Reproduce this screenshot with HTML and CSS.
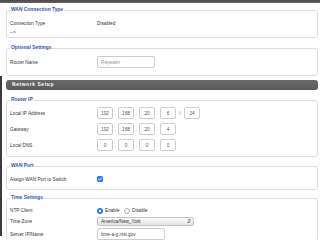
FILE: index.html
```html
<!DOCTYPE html>
<html>
<head>
<meta charset="utf-8">
<link rel="stylesheet" href="styles.css">
</head>
<body>
<div class="topbar"></div>
<div class="page">
  <fieldset class="fs fs-wan">
    <legend>WAN Connection Type</legend>
    <div class="row row-first"><span class="label">Connection Type</span><span class="value">Disabled</span></div>
    <div class="row row-arrow"><span class="label">--&gt;</span></div>
  </fieldset>

  <fieldset class="fs fs-opt">
    <legend>Optional Settings</legend>
    <div class="row"><span class="label">Router Name</span><input class="text text-name" type="text" placeholder="Repeater"></div>
  </fieldset>
</div>

<div class="page page-net">
  <div class="section">Network Setup</div>

  <fieldset class="fs fs-ip">
    <legend>Router IP</legend>
    <div class="row"><span class="label">Local IP Address</span>
      <span class="oct">192</span><span class="sep">.</span><span class="oct">168</span><span class="sep">.</span><span class="oct">20</span><span class="sep">.</span><span class="oct">6</span><span class="sep sep-slash">/</span><span class="oct">24</span>
    </div>
    <div class="row"><span class="label">Gateway</span>
      <span class="oct">192</span><span class="sep">.</span><span class="oct">168</span><span class="sep">.</span><span class="oct">20</span><span class="sep">.</span><span class="oct">4</span>
    </div>
    <div class="row"><span class="label">Local DNS</span>
      <span class="oct">0</span><span class="sep">.</span><span class="oct">0</span><span class="sep">.</span><span class="oct">0</span><span class="sep">.</span><span class="oct">0</span>
    </div>
  </fieldset>

  <fieldset class="fs fs-port">
    <legend>WAN Port</legend>
    <div class="row"><span class="label">Assign WAN Port to Switch</span>
      <span class="check"><svg viewBox="0 0 6 6" width="6" height="6"><path d="M1.4 3.1 L2.5 4.2 L4.6 1.8" fill="none" stroke="#fff" stroke-width="0.9" stroke-linecap="round" stroke-linejoin="round"/></svg></span>
    </div>
  </fieldset>

  <fieldset class="fs fs-time">
    <legend>Time Settings</legend>
    <div class="row row-ntp"><span class="label">NTP Client</span>
      <span class="radio radio-on"></span><span class="opt">Enable</span>
      <span class="radio"></span><span class="opt">Disable</span>
    </div>
    <div class="row row-tz"><span class="label">Time Zone</span>
      <span class="select">America/New_York<span class="arrows">&#8693;</span></span>
    </div>
    <div class="row"><span class="label">Server IP/Name</span>
      <span class="text text-server">time-a-g.nist.gov</span>
    </div>
  </fieldset>
</div>
</body>
</html>
```

FILE: styles.css
```css
* { box-sizing: border-box; }
html, body { margin: 0; padding: 0; background: #fff; }
body {
  font-family: "Liberation Sans", Arial, sans-serif;
  font-size: 4.7px;
  color: #333;
  width: 320px;
  height: 240px;
  overflow: hidden;
}
.topbar { height: 3px; background: linear-gradient(#4a4a4a, #666); }
.page { padding: 0 2px 0 6px; }
.page-net {
  border-left: 2px solid #3c3c3c;
  padding-left: 4px;
  padding-top: 4px;
  height: 160px;
}

.fs {
  border: 1px solid #ddd;
  border-radius: 3px;
  margin: 0;
  padding: 0 3px;
  min-width: 0;
}
.fs legend {
  font-size: 4.9px;
  line-height: 6px;
  font-weight: bold;
  color: #2f55ad;
  padding: 0 1px;
  margin-left: 0;
}
.row { display: flex; align-items: center; height: 12px; }
.label { width: 87px; flex: none; }

.fs-wan { margin-top: 4px; padding-top: 5px; }
.fs-wan .row-first { height: 10px; }
.fs-wan .row-arrow { height: 9px; }

.fs-opt { margin-top: 7px; padding-top: 5px; padding-bottom: 7px; }

.section {
  height: 10px;
  line-height: 10px;
  background: linear-gradient(#6a6a6a, #5a5a5a);
  border-radius: 3px;
  color: #fff;
  font-weight: bold;
  font-size: 4.9px;
  letter-spacing: 0.6px;
  padding-left: 6px;
}

.fs-ip { margin-top: 7px; padding-top: 4px; padding-bottom: 5px; display: flex; flex-direction: column; gap: 4px; }
.fs-port { margin-top: 6px; padding-top: 4px; padding-bottom: 4px; }
.fs-time { margin-top: 5px; padding-top: 4px; }
.fs-time .row-ntp { height: 11px; }
.fs-time .row-tz { height: 11px; margin-bottom: 1px; }

.text {
  height: 12px;
  border: 1px solid #ccc;
  border-radius: 2px;
  font: inherit;
  padding: 0 3px;
  background: #fff;
  display: flex;
  align-items: center;
  color: #444;
}
.text-name { width: 58px; outline: none; }
.text-name::placeholder { color: #999; }
.text-server { width: 68px; }

.oct {
  width: 16px;
  height: 12px;
  border: 1px solid #ccc;
  border-radius: 2px;
  display: flex;
  align-items: center;
  justify-content: center;
  color: #555;
  flex: none;
}
.sep { width: 5px; text-align: center; flex: none; color: #555; }
.sep-slash { width: 8px; }

.check {
  width: 6px;
  height: 6px;
  border-radius: 1.5px;
  background: #2a7bea;
  display: block;
}
.check svg { display: block; }

.radio {
  width: 6px;
  height: 6px;
  border-radius: 50%;
  border: 0.6px solid #aaa;
  background: #fff;
  flex: none;
}
.radio-on {
  border: none;
  background: radial-gradient(circle, #fff 0 1.1px, #2a7bea 1.3px);
}
.opt { margin: 0 2px 0 2px; width: 17px; }
.opt:last-child { width: auto; }

.select {
  width: 97px;
  height: 9px;
  border: 1px solid #c4c4c4;
  border-radius: 2px;
  background: linear-gradient(#fafafa, #e2e2e2);
  display: flex;
  align-items: center;
  padding-left: 3px;
  color: #333;
}
.arrows {
  margin-left: auto;
  margin-right: 2px;
  font-size: 4.5px;
  color: #555;
}
```
